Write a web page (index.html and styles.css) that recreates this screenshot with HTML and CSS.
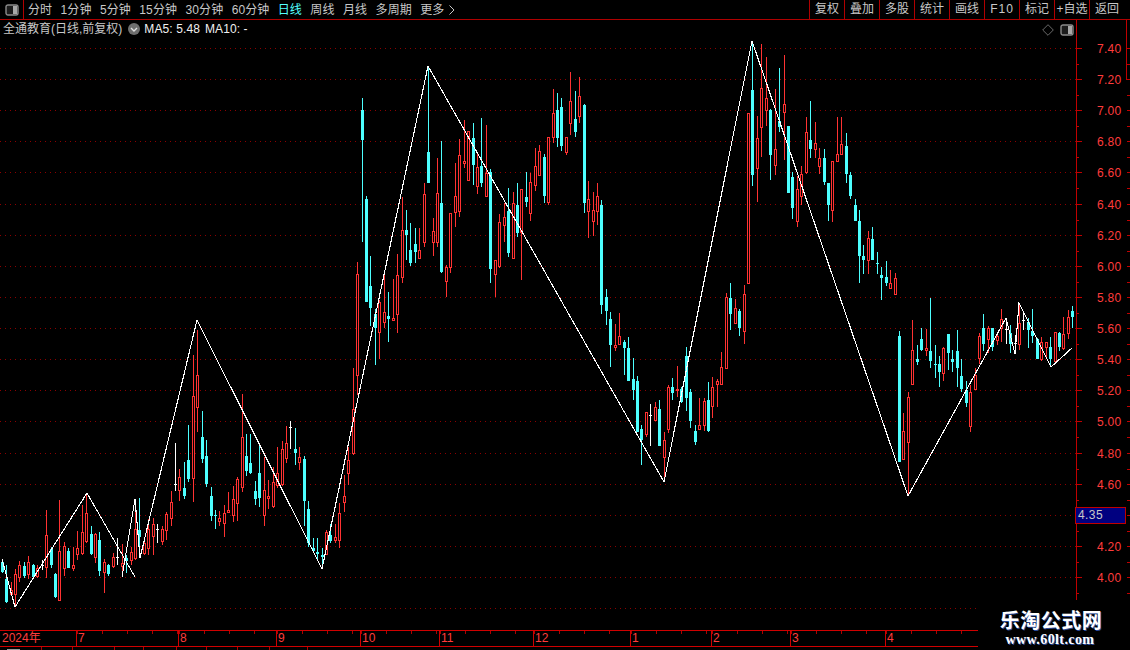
FILE: index.html
```html
<!DOCTYPE html>
<html lang="zh">
<head>
<meta charset="utf-8">
<title>全通教育 日线</title>
<link rel="stylesheet" href="styles.css">
</head>
<body>
<div class="app">
  <header class="topbar">
    <div class="corner">
      <svg class="panel-icon" width="14" height="12" viewBox="0 0 14 12"><rect x="1" y="1" width="12" height="10" rx="2" class="pi-frame"/><rect x="8" y="2" width="4" height="8" class="pi-bar"/></svg>
    </div>
    <nav class="periods">
      <span>分时</span><span>1分钟</span><span>5分钟</span><span>15分钟</span><span>30分钟</span><span>60分钟</span><span class="active">日线</span><span>周线</span><span>月线</span><span>多周期</span><span class="more">更多<svg width="6" height="10" viewBox="0 0 6 10"><path d="M.5.5L5 5 .5 9.5" fill="none" stroke="#c8c8c8"/></svg></span>
    </nav>
    <nav class="tools">
      <span>复权</span><span>叠加</span><span>多股</span><span>统计</span><span>画线</span><span class="f10">F10</span><span>标记</span><span>+自选</span><span>返回</span>
    </nav>
  </header>
  <main class="stage">
    <div id="chart" class="chart"></div>
    <div class="legend">
      <span class="stock">全通教育(日线,前复权)</span>
      <svg class="chev" width="12" height="12" viewBox="0 0 12 12"><circle cx="6" cy="6" r="6" fill="#6e6e6e"/><path d="M3 5l3 3 3-3" fill="none" stroke="#e0e0e0" stroke-width="1.4"/></svg>
      <span class="ma">MA5: 5.48</span>
      <span class="ma">MA10: -</span>
    </div>
    <div class="stage-icons">
      <svg width="12" height="12" viewBox="0 0 12 12"><path d="M6 .7L11.3 6 6 11.3.7 6z" fill="none" stroke="#6a6a6a"/></svg>
      <svg width="14" height="12" viewBox="0 0 14 12"><rect x="1" y="1" width="12" height="10" rx="2" class="pi-frame"/><rect x="8" y="2" width="4" height="8" class="pi-bar"/></svg>
    </div>
    <div class="quote">4.35</div>
  </main>
  <div class="dates">
    <div class="month m0">2024年</div>
    <div class="month">7</div>
    <div class="month">8</div>
    <div class="month">9</div>
    <div class="month">10</div>
    <div class="month">11</div>
    <div class="month">12</div>
    <div class="month">1</div>
    <div class="month">2</div>
    <div class="month">3</div>
    <div class="month">4</div>
  </div>
  <div class="lower">
    <span class="mark"></span><span></span><span></span><span></span><span></span><span></span><span></span><span></span><span></span>
  </div>
  <aside class="watermark">
    <div class="wm-title">乐淘公式网</div>
    <div class="wm-url">www.60lt.com</div>
  </aside>
</div>
<script src="chart.js"></script>
</body>
</html>
```
FILE: styles.css
```css
* { box-sizing: border-box; }
html, body { margin: 0; padding: 0; background: #000; overflow: hidden; }
.app {
  position: relative;
  width: 1130px;
  height: 650px;
  overflow: hidden;
  display: flex;
  flex-direction: column;
  background: #000;
  font: 12px/16px "Liberation Sans", "Noto Sans CJK SC", sans-serif;
  color: #c8c8c8;
}
.topbar {
  flex: 0 0 20px;
  display: flex;
  border-bottom: 1px solid #b00000;
}
.corner {
  flex: 0 0 24px;
  display: flex;
  align-items: center;
  justify-content: center;
  border-right: 1px solid #b00000;
}
.pi-frame { fill: #1c1c1c; stroke: #8a8a8a; stroke-width: 1.4; }
.pi-bar { fill: #a8a8a8; }
.periods {
  flex: 1;
  display: flex;
  align-items: center;
  gap: 8.4px;
  padding-left: 4px;
  letter-spacing: .1px;
}
.periods .active { color: #54ffff; }
.more { display: flex; align-items: center; gap: 5px; }
.tools { display: flex; height: 19px; padding-right: 6px; }
.tools span {
  width: 35px;
  border-left: 1px solid #b00000;
  text-align: center;
  line-height: 18px;
}
.tools .f10 { letter-spacing: 1px; }
.stage { position: relative; flex: 0 0 610px; }
.chart svg { display: block; }
.chart text { font: 12px "Liberation Sans", sans-serif; fill: #ff3c3c; letter-spacing: .3px; }
.legend {
  position: absolute;
  left: 3px;
  top: 1px;
  display: flex;
  align-items: center;
  height: 16px;
  background: #000;
}
.stock { color: #c8c8c8; }
.chev { margin: 0 4px 0 6px; }
.ma { color: #f0f0f0; margin-right: 5px; letter-spacing: .1px; }
.stage-icons {
  position: absolute;
  left: 1042px;
  top: 4px;
  display: flex;
  gap: 6px;
  align-items: center;
}
.quote {
  position: absolute;
  left: 1075px;
  top: 487px;
  width: 51px;
  height: 17px;
  padding-left: 2px;
  background: #000080;
  border: 1px solid #c00000;
  color: #c8c8c8;
  line-height: 15px;
  letter-spacing: .4px;
}
.dates {
  flex: 0 0 17px;
  display: grid;
  grid-template-columns: 76px 102px 98px 84px 79px 94px 97px 81px 79px 95px 93px;
  width: 978px;
  border-top: 1px solid #d00000;
  border-bottom: 1px solid #d00000;
  color: #ff3c3c;
  line-height: 15px;
}
.month {
  padding-left: 1px;
  border-left: 1px solid #d00000;
  background: linear-gradient(to right, #b00000 1px, transparent 1px) 25px 0 / 25px 3px repeat-x;
}
.m0 { border-left: 0; background: none; padding-left: 2px; }
.lower {
  flex: 1;
  display: grid;
  grid-template-columns: 42px 31px 42px 29px 33px 30px 31px 32px 38px;
  overflow: hidden;
}
.lower span { border-right: 1px solid #b00000; }
.lower .mark {
  background: linear-gradient(to right, transparent 7px, #9a9a9a 7px, #9a9a9a 20px, transparent 20px) 0 2px / 100% 1px no-repeat;
}
.watermark {
  position: absolute;
  left: 978px;
  top: 600px;
  width: 152px;
  height: 50px;
  background: #000;
  text-align: center;
  padding: 8px 0 0 0;
}
.wm-title {
  font: bold 20px/24px "Noto Sans CJK SC", sans-serif;
  letter-spacing: .5px;
  color: #fff;
  text-shadow: 1px 1px 0 #2a4a9a;
  padding-right: 6px;
}
.wm-url {
  font: bold 14px/15px "Liberation Serif", serif;
  letter-spacing: .4px;
  color: #fff;
  text-shadow: 1px 1px 0 #2a4a9a;
  padding-right: 8px;
}
```
FILE: chart.js
```js
// Candles are listed per sampled window: [originX, originY, rows], each value is at 3x of the window.
// row: x, wickTop, wickBottom, bodyTop, bodyBottom, kind (r rising, c falling, w flat)
var groups = [
[0,490,[
[7,208,250,215,247,'c'],[19,225,340,268,335,'c'],[33,275,315,300,315,'r'],[46,238,345,252,315,'r'],
[58,213,275,225,263,'r'],[72,215,265,228,258,'c'],[85,198,268,217,255,'r'],[100,222,262,225,262,'c'],
[112,225,265,235,262,'r'],[126,210,240,224,226,'w'],[139,60,265,135,235,'r'],[154,170,235,178,225,'c'],
[166,250,325,252,322,'c'],[178,30,332,183,332,'r'],[193,155,258,168,238,'r'],[205,175,235,183,233,'c'],
[220,170,243,225,237,'r'],[233,123,210,175,195,'r'],[247,45,195,127,193,'r'],[259,10,160,70,155,'r'],
[274,108,195,133,192,'c'],[286,130,218,133,203,'r'],[298,125,258,150,242,'c'],[313,208,308,217,248,'r'],
[325,222,258,225,252,'c'],[340,190,235,202,230,'r'],[352,145,225,200,202,'w'],[367,162,252,218,230,'r'],
[379,195,250,205,213,'c'],[394,170,225,187,213,'r'],[406,30,210,117,207,'r'],[418,25,205,120,140,'c'],
[433,145,195,160,193,'r'],[445,88,195,118,178,'r'],[461,85,195,102,142,'r'],[473,103,158,118,120,'w'],
[487,108,165,118,157,'r'],[499,65,150,73,122,'r'],[514,3,108,37,87,'r']
]],
[170,360,[
[15,250,392,372,374,'w'],[28,327,422,352,392,'r'],[43,307,417,384,408,'c'],[55,195,365,300,358,'c'],
[70,-15,425,107,358,'r'],[82,-90,215,45,143,'r'],[97,153,308,232,297,'c'],[109,240,380,289,372,'c'],
[124,380,483,408,467,'c'],[136,450,507,465,468,'c'],[148,453,497,475,486,'r'],[163,435,530,460,491,'r'],
[175,395,460,451,458,'r'],[190,378,487,418,467,'r'],[202,352,483,358,433,'r'],[217,102,395,232,385,'r'],
[229,222,347,289,333,'c'],[241,222,342,310,339,'c'],[256,363,435,394,416,'c'],[268,250,440,340,413,'c'],
[283,290,497,391,467,'r'],[295,360,447,408,418,'r'],[310,320,443,367,442,'r'],[322,262,385,340,378,'r'],
[337,243,378,268,375,'r'],[349,198,308,250,298,'r'],[361,183,267,200,202,'w'],[376,205,315,267,279,'c'],
[388,262,330,292,308,'r'],[403,288,498,297,422,'c'],[415,423,560,447,548,'c'],[430,533,575,564,572,'c'],
[442,533,600,576,581,'c'],[457,565,625,585,590,'c'],[470,510,585,517,585,'r'],[481,492,550,525,543,'c'],
[496,492,550,532,542,'r'],[508,430,563,460,542,'r'],[523,345,455,408,428,'r'],[536,262,375,300,343,'r']
]],
[340,250,[
[40,353,615,478,613,'r'],[52,37,435,72,377,'r'],[91,18,228,108,173,'c'],[106,178,345,193,233,'c'],
[118,150,327,157,250,'r'],[133,60,235,187,220,'r'],[145,127,275,198,207,'c'],[160,87,213,203,212,'r'],
[172,12,250,76,194,'r']
]],
[340,60,[
[67,113,545,150,240,'c'],[79,408,726,418,726,'c'],[187,410,670,510,653,'r'],[199,450,600,510,525,'c'],
[211,488,617,570,610,'c'],[226,503,608,552,575,'c'],[238,503,597,570,597,'r'],[253,368,560,402,548,'r'],
[265,18,368,275,368,'c'],[280,473,587,514,548,'r'],[292,293,560,400,548,'r'],[304,243,640,430,637,'c'],
[319,615,710,620,665,'r'],[331,460,640,460,623,'r'],[346,310,500,408,460,'r'],[358,237,470,285,455,'r'],
[373,180,323,303,311,'r'],[385,213,362,213,362,'r'],[400,190,375,235,315,'c'],[412,280,402,320,380,'r'],
[424,175,382,318,368,'c'],[439,195,410,338,410,'r'],[451,328,668,335,627,'c'],[466,600,710,600,645,'r'],
[478,462,625,487,622,'r'],[493,430,545,472,497,'r'],[505,385,592,453,578,'c'],[520,397,598,430,597,'r'],
[532,370,530,435,518,'c'],[544,388,660,388,520,'r'],[559,335,440,410,426,'c'],[571,340,482,367,463,'r'],
[586,265,392,318,377,'r'],[598,255,348,273,347,'r'],[613,282,428,290,407,'c'],[625,230,434,232,430,'r'],
[640,87,248,160,235,'r'],[652,98,260,150,235,'c'],[664,113,272,140,258,'c'],[679,230,285,232,278,'r'],
[691,37,225,123,193,'r'],[706,93,230,177,215,'c'],[718,52,190,108,170,'r'],[733,132,460,135,430,'c'],
[745,363,533,417,455,'r'],[760,395,527,450,485,'r'],[772,370,495,408,455,'r'],[784,420,720,435,720,'c']
]],
[590,270,[
[34,-60,132,-60,105,'c'],[49,57,165,80,123,'c'],[61,125,290,147,225,'c'],[76,162,243,225,233,'r'],
[88,128,225,198,225,'r'],[103,210,315,216,234,'c'],[115,202,333,234,333,'c'],[130,265,390,327,360,'c'],
[142,318,487,333,487,'c'],[154,465,585,477,510,'c'],[169,427,500,427,495,'r'],[181,403,527,435,437,'w'],
[196,396,453,411,453,'r'],[208,390,527,417,527,'c'],[223,487,637,510,563,'r'],[235,345,490,351,480,'r'],
[247,323,390,351,368,'c'],[262,288,380,357,363,'r'],[274,350,400,357,397,'c'],[289,232,423,258,385,'c'],
[301,357,473,366,452,'c'],[316,465,525,483,516,'c'],[328,385,480,466,480,'r'],[343,385,483,393,467,'r'],
[355,337,485,390,483,'c'],[367,322,443,352,410,'r'],[382,327,410,333,345,'r'],[394,247,345,291,344,'r'],
[409,70,297,81,296,'r'],[421,40,180,85,132,'c'],[436,88,162,114,162,'r'],[448,117,197,123,175,'c'],
[463,45,222,72,186,'r']
]],
[740,40,[
[25,220,731,220,731,'r'],[37,10,438,150,405,'c'],[52,228,485,295,387,'r'],[64,12,350,145,263,'r'],
[79,52,258,175,212,'r'],[91,207,420,210,345,'c'],[106,147,405,327,378,'r'],[118,83,275,242,262,'c'],
[133,45,360,193,218,'r'],[145,258,460,258,458,'c'],[157,397,537,411,503,'c'],[172,407,560,448,545,'r'],
[184,378,495,403,470,'r'],[199,232,402,277,399,'r'],[211,183,353,300,327,'c'],[226,247,355,310,329,'r'],
[238,325,402,355,380,'r'],[253,327,435,355,427,'c'],[265,430,543,430,495,'c'],[277,363,545,363,513,'r'],
[292,232,366,343,365,'r'],[304,232,345,313,344,'r'],[319,280,430,318,402,'c'],[331,397,477,405,468,'c'],
[346,477,543,495,543,'c'],[358,511,728,543,648,'c'],[370,615,702,648,660,'c'],[385,573,702,595,662,'r'],
[397,562,660,597,660,'c'],[412,637,702,669,671,'c'],[424,682,780,705,714,'c'],[439,663,738,711,729,'c'],
[451,690,747,730,747,'r'],[466,700,765,715,765,'r']
]],
[880,290,[
[58,123,515,138,515,'c'],[70,370,510,423,510,'r'],[85,305,615,322,458,'r'],[97,90,285,181,285,'r'],
[112,165,225,207,216,'c'],[124,113,182,147,180,'c'],[139,117,198,175,183,'r'],[151,24,234,183,213,'c'],
[166,165,263,222,224,'c'],[178,197,291,222,247,'c'],[190,170,272,175,251,'r'],[205,132,240,132,189,'c'],
[217,180,245,207,216,'c'],[232,120,290,183,234,'c'],[244,207,305,258,297,'c'],[259,273,350,301,340,'c'],
[271,285,425,307,410,'r'],[286,235,300,256,300,'r'],[298,130,222,138,208,'r'],[310,72,182,114,162,'c'],
[325,108,188,114,150,'r'],[337,114,183,114,172,'c'],[352,128,165,138,153,'r'],[364,57,157,88,116,'r'],
[379,88,163,118,120,'w'],[391,105,190,130,163,'c'],[406,135,193,160,162,'w'],[418,40,180,100,166,'r'],
[430,65,120,90,92,'w'],[445,85,175,97,120,'c'],[457,57,160,123,138,'c'],[472,145,207,148,207,'c'],
[484,142,212,157,210,'r'],[499,155,205,157,173,'r'],[511,140,230,172,207,'c'],[526,125,217,125,215,'r'],
[538,125,183,130,172,'c'],[550,82,180,133,176,'r'],[565,60,147,82,133,'r'],[577,47,115,63,80,'c']
]]
];

var zigzags = [
  [[2,559],[15,607],[87,493],[135,577]],
  [[122,577],[135,499],[140,558],[197,320],[322,569],[428,66],[664,482],[752,41],[880,414],[908,496],
   [1006,318],[1015,354],[1019,303],[1051,367],[1072,348]]
];

var COLORS = { r: '#ff3232', c: '#4dffff', w: '#ffffff' };
var TOP = 20, GRID0 = 48, STEP = 31.12;
var out = [];

function rect(x, y, w, h, fill) {
  out.push('<rect x="' + x + '" y="' + y + '" width="' + w + '" height="' + h + '" fill="' + fill + '"/>');
}

// gridlines and price axis
for (var i = 0; i <= 18; i++) {
  var gy = Math.round(GRID0 + STEP * i);
  out.push('<line x1="0" x2="1076" y1="' + (gy + .5) + '" y2="' + (gy + .5) + '" stroke="#8c0000" stroke-dasharray="1 4"/>');
  if (i < 18) {
    rect(1076, gy, 6, 1, '#c00000');
    rect(1076, Math.round(gy + STEP / 2), 3, 1, '#c00000');
    rect(1127, gy, 3, 1, '#c00000');
    rect(1127, Math.round(gy + STEP / 2), 3, 1, '#c00000');
    if (i !== 15) {
      var label = (7.4 - i * 0.2).toFixed(2);
      out.push('<text x="1097" y="' + (gy + 5) + '">' + label + '</text>');
    }
  }
}
rect(1076, TOP, 1, 580, '#c00000');
rect(1126, TOP, 1, 60, '#c00000');

// candles
groups.forEach(function (g) {
  g[2].forEach(function (row) {
    var x = Math.floor(g[0] + row[0] / 3);
    var wt = Math.round(g[1] + row[1] / 3), wb = Math.round(g[1] + row[2] / 3);
    var bt = Math.round(g[1] + row[3] / 3), bb = Math.round(g[1] + row[4] / 3);
    var col = COLORS[row[5]];
    rect(x, wt, 1, Math.max(1, wb - wt), col);
    if (bb - bt < 1) bb = bt + 1;
    rect(x - 1, bt, 3, bb - bt, col);
    if (row[5] === 'r' && bb - bt > 2) rect(x, bt + 1, 1, bb - bt - 2, '#000');
  });
});

// swing lines
zigzags.forEach(function (z) {
  out.push('<polyline fill="none" stroke="#fff" stroke-width="1.1" points="' +
    z.map(function (p) { return p.join(','); }).join(' ') + '"/>');
});

document.getElementById('chart').innerHTML =
  '<svg width="1130" height="610" viewBox="0 ' + TOP + ' 1130 610" shape-rendering="crispEdges">' + out.join('') + '</svg>';
```
